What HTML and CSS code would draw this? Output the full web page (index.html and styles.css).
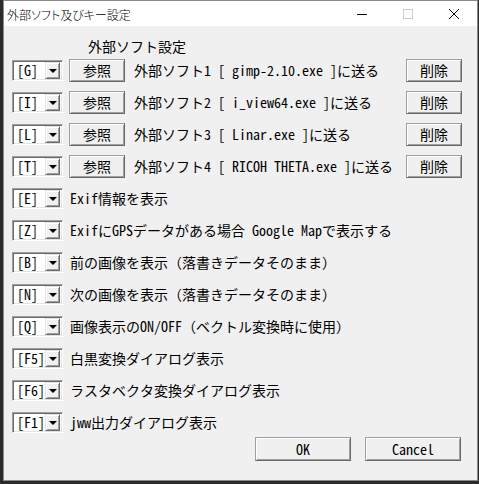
FILE: index.html
```html
<!DOCTYPE html>
<html lang="ja">
<head>
    <meta charset="UTF-8">
    <meta name="viewport" content="width=device-width, initial-scale=1.0">
    <title>外部ソフト及びキー設定</title>
    <link rel="stylesheet" href="styles.css">
</head>
<body>
    <div class="window">
        <div class="titlebar">
            <span class="title">外部ソフト及びキー設定</span>
            <div class="caption-buttons">
                <span class="caption-btn">
                    <svg width="12" height="12" viewBox="0 0 12 12"><line x1="1" y1="6.5" x2="11" y2="6.5" stroke="#000" stroke-width="1"/></svg>
                </span>
                <span class="caption-btn">
                    <svg width="12" height="12" viewBox="0 0 12 12"><rect x="1.5" y="1.5" width="9" height="9" fill="none" stroke="#cccccc" stroke-width="1"/></svg>
                </span>
                <span class="caption-btn">
                    <svg width="12" height="12" viewBox="0 0 12 12"><path d="M1 1 L11 11 M11 1 L1 11" stroke="#000" stroke-width="1" fill="none"/></svg>
                </span>
            </div>
        </div>

        <div class="client">
            <div class="section-title">外部ソフト設定</div>

            <div class="row">
                <div class="combo"><span class="combo-value">[G]</span><span class="combo-arrow"></span></div>
                <button class="btn btn-ref">参照</button>
                <span class="label soft-label">外部ソフト1 [ gimp-2.10.exe ]に送る</span>
                <button class="btn btn-del">削除</button>
            </div>
            <div class="row">
                <div class="combo"><span class="combo-value">[I]</span><span class="combo-arrow"></span></div>
                <button class="btn btn-ref">参照</button>
                <span class="label soft-label">外部ソフト2 [ i_view64.exe ]に送る</span>
                <button class="btn btn-del">削除</button>
            </div>
            <div class="row">
                <div class="combo"><span class="combo-value">[L]</span><span class="combo-arrow"></span></div>
                <button class="btn btn-ref">参照</button>
                <span class="label soft-label">外部ソフト3 [ Linar.exe ]に送る</span>
                <button class="btn btn-del">削除</button>
            </div>
            <div class="row">
                <div class="combo"><span class="combo-value">[T]</span><span class="combo-arrow"></span></div>
                <button class="btn btn-ref">参照</button>
                <span class="label soft-label">外部ソフト4 [ RICOH THETA.exe ]に送る</span>
                <button class="btn btn-del">削除</button>
            </div>

            <div class="row">
                <div class="combo"><span class="combo-value">[E]</span><span class="combo-arrow"></span></div>
                <span class="label key-label">Exif情報を表示</span>
            </div>
            <div class="row">
                <div class="combo"><span class="combo-value">[Z]</span><span class="combo-arrow"></span></div>
                <span class="label key-label">ExifにGPSデータがある場合 Google Mapで表示する</span>
            </div>
            <div class="row">
                <div class="combo"><span class="combo-value">[B]</span><span class="combo-arrow"></span></div>
                <span class="label key-label">前の画像を表示（落書きデータそのまま）</span>
            </div>
            <div class="row">
                <div class="combo"><span class="combo-value">[N]</span><span class="combo-arrow"></span></div>
                <span class="label key-label">次の画像を表示（落書きデータそのまま）</span>
            </div>
            <div class="row">
                <div class="combo"><span class="combo-value">[Q]</span><span class="combo-arrow"></span></div>
                <span class="label key-label">画像表示のON/OFF（ベクトル変換時に使用）</span>
            </div>
            <div class="row">
                <div class="combo"><span class="combo-value">[F5]</span><span class="combo-arrow"></span></div>
                <span class="label key-label">白黒変換ダイアログ表示</span>
            </div>
            <div class="row">
                <div class="combo"><span class="combo-value">[F6]</span><span class="combo-arrow"></span></div>
                <span class="label key-label">ラスタベクタ変換ダイアログ表示</span>
            </div>
            <div class="row">
                <div class="combo"><span class="combo-value">[F1]</span><span class="combo-arrow"></span></div>
                <span class="label key-label">jww出力ダイアログ表示</span>
            </div>

            <div class="footer">
                <button class="btn btn-wide">OK</button>
                <button class="btn btn-wide">Cancel</button>
            </div>
        </div>
    </div>
</body>
</html>
```

FILE: styles.css
```css
html, body {
    margin: 0;
    padding: 0;
}
body {
    background-color: #2b2b2b;
    font-family: "Noto Sans Mono CJK JP", "Noto Sans CJK JP", monospace;
    font-size: 14px;
    font-weight: 300;
    color: #000;
}
.window {
    box-sizing: border-box;
    width: 475px;
    height: 481px;
    margin-left: 3px;
    border: 1px solid #8a8a8a;
    background-color: #f0f0f0;
    display: flex;
    flex-direction: column;
}
.titlebar {
    height: 25px;
    background-color: #fff;
    display: flex;
    align-items: center;
    padding-left: 3px;
}
.title {
    font-family: "Noto Sans CJK JP", sans-serif;
    font-size: 12px;
    font-feature-settings: "palt";
    flex: 1;
    margin-top: 1px;
}
.caption-buttons {
    display: flex;
    height: 25px;
}
.caption-btn {
    width: 46px;
    display: flex;
    align-items: center;
    justify-content: center;
}
.caption-btn svg {
    display: block;
}
.client {
    flex: 1;
    padding: 12px 15px 0 8px;
}
.section-title {
    height: 16px;
    line-height: 16px;
    padding-left: 76px;
}
.row {
    height: 32px;
    display: flex;
    align-items: center;
}
.label {
    white-space: pre;
    line-height: 16px;
}
.soft-label {
    margin-left: 9px;
}
.key-label {
    margin-left: 7px;
}
.combo {
    box-sizing: border-box;
    width: 51px;
    height: 21px;
    background-color: #fff;
    border: 1px solid;
    border-color: #a0a0a0 #fff #fff #a0a0a0;
    box-shadow: inset 1px 1px #696969, inset -1px -1px #e3e3e3;
    display: flex;
    align-items: center;
    padding: 2px;
}
.combo-value {
    flex: 1;
    padding-left: 2px;
    line-height: 15px;
}
.combo-arrow {
    box-sizing: border-box;
    width: 15px;
    height: 17px;
    background-color: #f0f0f0;
    border: 1px solid;
    border-color: #e3e3e3 #696969 #696969 #e3e3e3;
    box-shadow: inset 1px 1px #fff, inset -1px -1px #a0a0a0;
    display: flex;
    align-items: center;
    justify-content: center;
}
.combo-arrow::after {
    content: "";
    border-left: 4px solid transparent;
    border-right: 4px solid transparent;
    border-top: 4px solid #000;
    margin-top: 1px;
}
.btn {
    box-sizing: border-box;
    height: 23px;
    padding: 0;
    background-color: #f0f0f0;
    border: 1px solid;
    border-color: #a0a0a0 #696969 #696969 #a0a0a0;
    box-shadow: inset 1px 1px #fff, inset -1px -1px #a0a0a0;
    font-family: inherit;
    font-size: 14px;
    font-weight: 300;
    color: #000;
    line-height: 16px;
}
.btn-ref {
    width: 56px;
    margin-left: 6px;
}
.btn-del {
    width: 56px;
    margin-left: auto;
}
.footer {
    display: flex;
    justify-content: flex-end;
    gap: 14px;
    margin-top: -1px;
    padding-right: 1px;
}
.btn-wide {
    width: 96px;
    height: 24px;
}
```
